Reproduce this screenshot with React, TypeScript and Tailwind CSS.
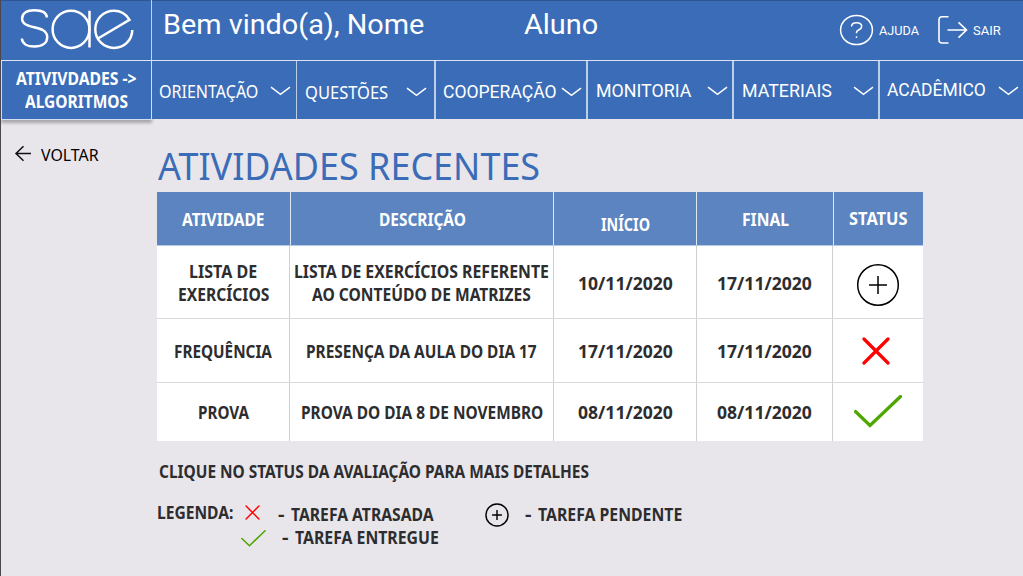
import { useLayoutEffect, useRef, type ReactNode } from "react";
import { clsx } from "clsx";

/** A single line of text, condensed or widened to fill the width of its box. */
function Fit({ className, children }: { className: string; children: string }) {
  const box = useRef<HTMLSpanElement>(null);
  const text = useRef<HTMLSpanElement>(null);
  useLayoutEffect(() => {
    if (!box.current || !text.current) return;
    text.current.style.transform = `scaleX(${box.current.clientWidth / text.current.offsetWidth})`;
  }, [children]);
  return (
    <span ref={box} className={clsx("block shrink-0", className)}>
      <span ref={text} className="inline-block origin-left whitespace-nowrap align-top">
        {children}
      </span>
    </span>
  );
}

function Logo() {
  return (
    <svg className="ml-[15px] mt-1 h-[48px] w-[122px]" viewBox="16 4 122 48" fill="none" stroke="#fff" strokeWidth="2.5">
      <path d="M47 17.5C46.5 13 42 10.3 34.5 10.3C26.500 10.300 22.100 13.500 22.100 18.500C22.100 30.500 47.200 24 47.200 37.200C47.200 43.200 42 46.500 34.500 46.500C27 46.500 22.200 43.500 21.900 38.500" />
      <ellipse cx="71" cy="29.300" rx="18.400" ry="18.600" />
      <path d="M89.500 10.800V47.500" />
      <path d="M98 38.500L129.500 19.800C126 14 120.500 10.700 114 10.700C103.500 10.700 95.300 19 95.300 29.300C95.300 39.600 103.500 47.900 114 47.900C124 47.900 132 40.500 132.300 30" />
    </svg>
  );
}

function Chevron({ className }: { className: string }) {
  return (
    <svg className={clsx("h-[10px] w-[21px] shrink-0", className)} viewBox="0 0 21 10" fill="none" stroke="#fff" strokeWidth="1.5">
      <path d="M1 1.100L10.500 8.300L20 1.100" />
    </svg>
  );
}

function Cross({ className, stroke }: { className: string; stroke: number }) {
  return (
    <svg className={className} viewBox="0 0 28 28" fill="none" stroke="#ff0000" strokeWidth={stroke} strokeLinecap="round">
      <path d="M2 2L26 26M26 2L2 26" />
    </svg>
  );
}

function Tick({ className, stroke }: { className: string; stroke: number }) {
  return (
    <svg className={className} viewBox="0 0 48 33" fill="none" stroke="#4ea600" strokeWidth={stroke}>
      <path d="M1.500 16.500L16 30.500L46.500 1.500" strokeLinecap="round" />
    </svg>
  );
}

function Plus({ className, stroke, arm }: { className: string; stroke: number; arm: number }) {
  return (
    <svg className={className} viewBox="0 0 44 44" fill="none" stroke="#000" strokeWidth={stroke}>
      <circle cx="22" cy="22" r="20.300" />
      <path d={`M${22 - arm} 22H${22 + arm}M22 ${22 - arm}V${22 + arm}`} />
    </svg>
  );
}

const noto = "font-['Noto_Sans',sans-serif]";
const roboto = "font-['Roboto',sans-serif]";

const menu = [
  { label: "ORIENTAÇÃO", cell: "w-[145px] border-r pl-[7px]", text: "w-[99px] mt-[18px] text-[17.500px] font-['Noto_Sans',sans-serif]", chevron: "ml-[12px] mt-[25px]" },
  { label: "QUESTÕES", cell: "w-[139px] border-r-2 pl-[8px]", text: "w-[83px] mt-[19px] text-[17.500px] font-['Noto_Sans',sans-serif]", chevron: "ml-[18px] mt-[26px]" },
  { label: "COOPERAÇÃO", cell: "w-[152px] border-r-2 pl-[7px]", text: "w-[114px] mt-[19px] text-[18px] font-['Roboto',sans-serif]", chevron: "ml-[4px] mt-[26px]" },
  { label: "MONITORIA", cell: "w-[146px] border-r-2 pl-[8px]", text: "w-[95px] mt-[18px] text-[18px] font-['Roboto',sans-serif]", chevron: "ml-[16px] mt-[25px]" },
  { label: "MATERIAIS", cell: "w-[146px] border-r-2 pl-[8px]", text: "w-[90px] mt-[18px] text-[18px] font-['Roboto',sans-serif]", chevron: "ml-[21px] mt-[25px]" },
  { label: "ACADÊMICO", cell: "w-[143px] pl-[7px]", text: "w-[99px] mt-[17px] text-[18px] font-['Roboto',sans-serif]", chevron: "ml-[12px] mt-[25px]" },
];

const columns = [
  { label: "ATIVIDADE", cell: "pt-[16px] border-r", width: "w-[83px]" },
  { label: "DESCRIÇÃO", cell: "pt-[16px] border-r", width: "w-[87px]" },
  { label: "INÍCIO", cell: "pt-[21px] border-r", width: "w-[49px]" },
  { label: "FINAL", cell: "pt-[16px] border-r", width: "w-[47px]" },
  { label: "STATUS", cell: "pt-[15px]", width: "w-[59px]" },
];

type Line = { text: string; width: string };
type Row = { height: string; pad: string; datePad: string; name: Line[]; description: Line[]; start: string; end: string; status: ReactNode };

const rows: Row[] = [
  {
    height: "h-[73px] border-b",
    pad: "pt-[14px]",
    datePad: "pt-[26px]",
    name: [{ text: "LISTA DE", width: "w-[68px]" }, { text: "EXERCÍCIOS", width: "w-[91px]" }],
    description: [
      { text: "LISTA DE EXERCÍCIOS REFERENTE", width: "w-[255px]" },
      { text: "AO CONTEÚDO DE MATRIZES", width: "w-[219px]" },
    ],
    start: "10/11/2020",
    end: "17/11/2020",
    status: <Plus className="ml-[24px] mt-[17px] size-[44px]" stroke={1.5} arm={9} />,
  },
  {
    height: "h-[64px] border-b",
    pad: "pt-[21px]",
    datePad: "pt-[21px]",
    name: [{ text: "FREQUÊNCIA", width: "w-[98px]" }],
    description: [{ text: "PRESENÇA DA AULA DO DIA 17", width: "w-[231px]" }],
    start: "17/11/2020",
    end: "17/11/2020",
    status: <Cross className="ml-[30px] mt-[18px] size-[28px]" stroke={3.2} />,
  },
  {
    height: "h-[58px]",
    pad: "pt-[18px]",
    datePad: "pt-[18px]",
    name: [{ text: "PROVA", width: "w-[51px]" }],
    description: [{ text: "PROVA DO DIA 8 DE NOVEMBRO", width: "w-[242px]" }],
    start: "08/11/2020",
    end: "08/11/2020",
    status: <Tick className="ml-[22px] mt-[12px] h-[33px] w-[48px]" stroke={3.2} />,
  },
];

function Lines({ lines, pad }: { lines: Line[]; pad: string }) {
  return (
    <div className={clsx("flex flex-col items-center border-r border-[#cfcfd2]", pad)}>
      {lines.map((line) => (
        <Fit key={line.text} className={line.width}>{line.text}</Fit>
      ))}
    </div>
  );
}

export default function App() {
  return (
    <div className={clsx("flex h-[576px] w-[1023px] flex-col overflow-hidden border-l border-[#4a484c] bg-[#e8e6eb]", noto)}>
      <header className="flex h-[61px] shrink-0 border-b border-b-[#dbe4f2] bg-[#3b6cb7] text-white shadow-[inset_0_1px_0_#2f5592]">
        <div className="w-[151px] shrink-0 border-r border-[#c3d2ea]">
          <Logo />
        </div>
        <Fit className={clsx("ml-[11px] mt-[8px] w-[261px] text-[28.500px] leading-[34px]", roboto)}>Bem vindo(a), Nome</Fit>
        <Fit className={clsx("ml-[100px] mt-[8px] w-[74px] text-[28.500px] leading-[34px]", roboto)}>Aluno</Fit>
        <svg className="ml-[241px] mt-[13px] h-[34px] w-[36px] shrink-0" viewBox="839 13 36 34" fill="none" stroke="#fff" strokeWidth="1.5">
          <ellipse cx="856.500" cy="30" rx="15.900" ry="14.600" />
          <path d="M851.500 26.500C851.700 24 853.700 22.700 856.500 22.700C859.600 22.700 861.700 24.200 861.700 26.600C861.700 30.200 856.500 29.200 856.500 32.500V33.300" />
          <path d="M856.500 36.300V37.900" />
        </svg>
        <Fit className={clsx("ml-[4px] mt-[21px] w-[40px] text-[13px] leading-[20px]", roboto)}>AJUDA</Fit>
        <svg className="ml-[18px] mt-[14px] h-[32px] w-[32px] shrink-0" viewBox="937 14 32 32" fill="none" stroke="#fff" strokeWidth="1.600">
          <path d="M948.500 16.800H942Q939 16.800 939 19.800V40Q939 43 942 43H948.500" />
          <path d="M947.500 30H966.500M958.500 22.300L966.500 30L958.500 37.700" />
        </svg>
        <Fit className={clsx("ml-[4px] mt-[21px] w-[28px] text-[13px] leading-[20px]", roboto)}>SAIR</Fit>
      </header>

      <nav className="flex h-[59px] shrink-0 text-white">
        <div className="flex w-[151px] shrink-0 flex-col items-center border-x border-b border-[#d3dff0] bg-[#3b6cb7] pt-[7px] text-[17px] font-bold leading-[22.500px] shadow-[0_3px_3px_rgba(0,0,0,0.28)]">
          <Fit className="w-[121px]">{"ATIVIVDADES ->"}</Fit>
          <Fit className="w-[103px]">ALGORITMOS</Fit>
        </div>
        {menu.map((item) => (
          <div key={item.label} className={clsx("flex h-[58px] shrink-0 border-[#bdcee9] bg-[#3b6cb7] leading-[24px]", item.cell)}>
            <Fit className={item.text}>{item.label}</Fit>
            <Chevron className={item.chevron} />
          </div>
        ))}
      </nav>

      <main className="flex">
        <aside className="flex w-[156px] shrink-0 pl-[13px] text-black">
          <svg className="mt-[25px] h-[18px] w-[19px]" viewBox="14 145 19 18" fill="none" stroke="#111" strokeWidth="1.500">
            <path d="M31 153.500H16M23.500 146.200L16 153.500L23.500 160.800" />
          </svg>
          <Fit className="ml-[8px] mt-[23px] w-[58px] text-[17px] leading-[24px]">VOLTAR</Fit>
        </aside>

        <section className="pt-[19px]">
          <h1 className="mb-px text-[38px] leading-[52px] text-[#3b6cb7]">
            <Fit className="ml-[1px] w-[382px]">ATIVIDADES RECENTES</Fit>
          </h1>

          <div className="w-[766px] bg-white text-[17px] font-bold leading-[23px] text-[#2d2d2f]">
            <div className="grid h-[54px] grid-cols-[134px_263px_143px_137px_89px] border-b border-[#b4c8e6] bg-[#5b84c1] text-white">
              {columns.map((column) => (
                <div key={column.label} className={clsx("flex justify-center border-[#dfe7f3]", column.cell)}>
                  <Fit className={column.width}>{column.label}</Fit>
                </div>
              ))}
            </div>
            {rows.map((row) => (
              <div key={row.height} className={clsx("grid grid-cols-[133px_264px_143px_136px_90px] border-[#d9d9dc]", row.height)}>
                <Lines lines={row.name} pad={row.pad} />
                <Lines lines={row.description} pad={row.pad} />
                <Lines lines={[{ text: row.start, width: "w-[95px]" }]} pad={row.datePad} />
                <Lines lines={[{ text: row.end, width: "w-[95px]" }]} pad={row.datePad} />
                <div className="-ml-px">{row.status}</div>
              </div>
            ))}
          </div>

          <div className="pt-[19px] text-[17px] font-bold leading-[23px] text-[#2d2d2f]">
            <Fit className="ml-[2px] w-[430px]">CLIQUE NO STATUS DA AVALIAÇÃO PARA MAIS DETALHES</Fit>
            <div className="mt-[18px] flex">
              <Fit className="w-[76px]">LEGENDA:</Fit>
              <div className="ml-[8px]">
                <div className="flex h-[23px]">
                  <Cross className="ml-[4px] mt-[4px] size-[15px]" stroke={2.7} />
                  <Fit className="ml-[18px] mt-[2px] w-[6px]">-</Fit>
                  <Fit className="ml-[7px] mt-[2px] w-[143px]">TAREFA ATRASADA</Fit>
                  <Plus className="ml-[51px] mt-[2px] size-[24px]" stroke={2.6} arm={9} />
                  <Fit className="ml-[16px] mt-[2px] w-[6px]">-</Fit>
                  <Fit className="ml-[7px] mt-[2px] w-[144px]">TAREFA PENDENTE</Fit>
                </div>
                <div className="flex h-[23px]">
                  <Tick className="mt-[6px] h-[17px] w-[25px]" stroke={3} />
                  <Fit className="ml-[16px] mt-[2px] w-[6px]">-</Fit>
                  <Fit className="ml-[7px] mt-[2px] w-[144px]">TAREFA ENTREGUE</Fit>
                </div>
              </div>
            </div>
          </div>
        </section>
      </main>
    </div>
  );
}
